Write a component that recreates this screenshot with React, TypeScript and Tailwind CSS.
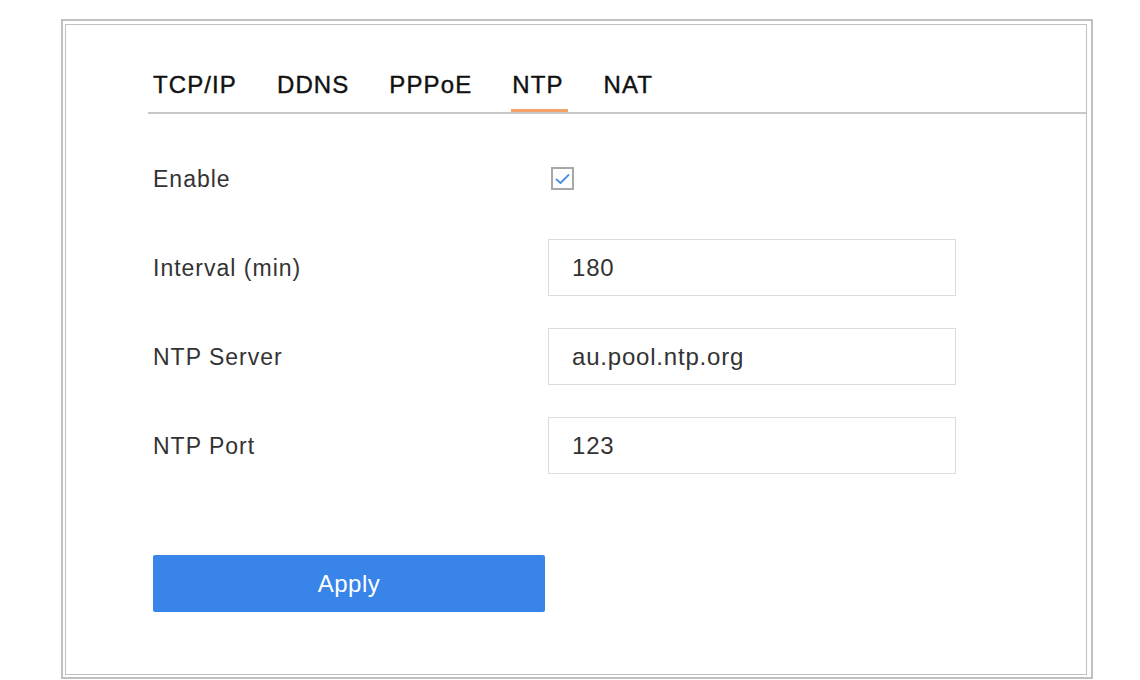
import React from 'react';

const tabs = ['TCP/IP', 'DDNS', 'PPPoE', 'NTP', 'NAT'];

function Field({ value }: { value: string }) {
    return (
        <div className="w-[408px] h-[57px] border border-[#dcdcdc] bg-white flex items-center pl-[23px] text-[24px] tracking-[0.8px] text-[#333]">
            {value}
        </div>
    );
}

function Row({ label, children }: { label: string; children: React.ReactNode }) {
    return (
        <div className="h-[89px] flex items-center">
            <div className="w-[395px] pt-[2px] text-[23px] tracking-[1px] text-[#333]">{label}</div>
            {children}
        </div>
    );
}

export default function App() {
    return (
        <div className="w-[1140px] h-[680px] bg-white font-['Liberation_Sans',Arial,sans-serif] pt-[19px] pl-[61px]">
            <div className="w-[1032px] h-[660px] border-2 border-[#c0c0c0] flex">
                <div className="flex-1 ml-[2px] mt-[3px] mr-[4px] mb-[2px] border border-[#c0c0c0] flex flex-col">
                    <div className="ml-[82px] pl-[5px] pt-[48px] border-b-2 border-[#c8c8c8] flex gap-10">
                        {tabs.map((t) => (
                            <div key={t} className="relative pb-[15px] text-[24px] leading-[24px] tracking-[1.1px] text-[#111] [-webkit-text-stroke:0.4px_#111]">
                                {t}
                                {t === 'NTP' && (
                                    <span className="absolute left-[-1px] right-[-4px] bottom-0 h-[3px] bg-[#f5a36b]" />
                                )}
                            </div>
                        ))}
                    </div>

                    <div className="ml-[87px] mt-[20px] flex flex-col">
                        <Row label="Enable">
                            <div className="ml-[3px] w-[23px] h-[23px] border-2 border-[#a8a8a8] bg-white flex items-center justify-center">
                                <svg width="15" height="12" viewBox="0 0 15 12" fill="none">
                                    <path d="M1.5 6.5 L5.5 10 L13.5 2" stroke="#4a8fe6" strokeWidth="1.8" strokeLinecap="round" strokeLinejoin="round" />
                                </svg>
                            </div>
                        </Row>
                        <Row label="Interval (min)">
                            <Field value="180" />
                        </Row>
                        <Row label="NTP Server">
                            <Field value="au.pool.ntp.org" />
                        </Row>
                        <Row label="NTP Port">
                            <Field value="123" />
                        </Row>

                        <button className="mt-[65px] w-[392px] h-[57px] bg-[#3884e8] rounded-[2px] text-white text-[24px] tracking-[0.5px]">
                            Apply
                        </button>
                    </div>
                </div>
            </div>
        </div>
    );
}
